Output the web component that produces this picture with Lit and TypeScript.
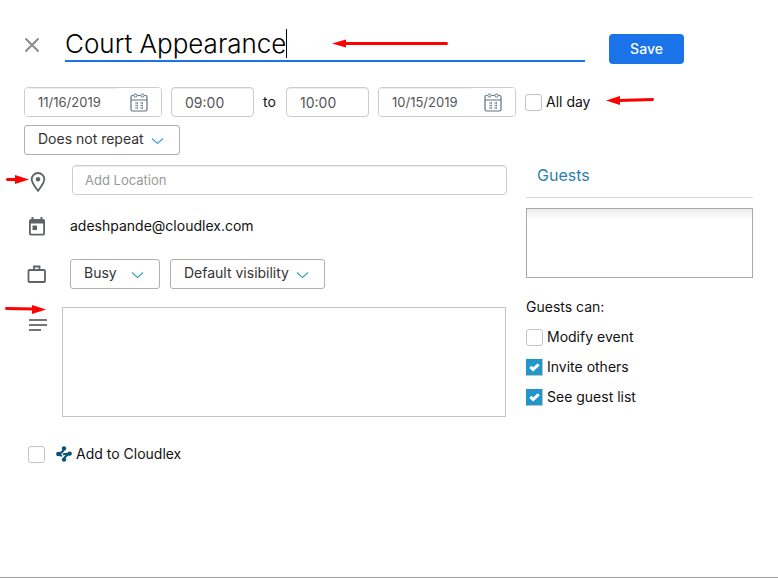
import { LitElement, html, svg, css } from "lit";
import { customElement, property } from "lit/decorators.js";

const chevron = svg`<path d="M1 1.5 L6.5 6.5 L12 1.5" fill="none" stroke="#3fa3cc" stroke-width="1.2"/>`;

@customElement("event-select")
class EventSelect extends LitElement {
  @property() label = "";
  @property() value = "";

  static styles = css`
    :host { display: block; position: relative; }
    select {
      appearance: none;
      display: block;
      width: 100%;
      height: 30px;
      padding: 0 13px 2px;
      border: 1px solid #b0b0b0;
      border-radius: 3px;
      background: #fff;
      color: #333;
      font: 14px/20px Inter, "Open Sans", sans-serif;
    }
    svg { position: absolute; right: 16px; top: 12px; pointer-events: none; }
  `;

  render() {
    return html`
      <select aria-label=${this.label}><option>${this.value}</option></select>
      <svg width="13" height="8" viewBox="0 0 13 8">${chevron}</svg>
    `;
  }
}

@customElement("event-date")
class EventDate extends LitElement {
  @property() label = "";
  @property() value = "";

  static styles = css`
    :host {
      display: flex;
      box-sizing: border-box;
      height: 30px;
      border: 1px solid #ccc;
      border-radius: 4px;
      overflow: hidden;
    }
    input {
      flex: 1;
      min-width: 0;
      padding: 0 0 0 13px;
      border: 0;
      color: #555;
      font: 13px/20px Inter, "Open Sans", sans-serif;
      box-shadow: inset 0 1px 1px rgba(0, 0, 0, 0.075);
    }
    button {
      display: flex;
      align-items: center;
      justify-content: center;
      width: 44px;
      padding: 0;
      border: 0;
      background: #fff;
    }
  `;

  render() {
    return html`
      <input type="text" aria-label=${this.label} .value=${this.value} />
      <button aria-label="Open calendar">
        <svg width="18" height="19" viewBox="0 0 18 19" fill="none" stroke="#5f7180">
          <path d="M3.5 2.5 H2.5 Q1 2.5 1 4 V16.5 Q1 18 2.5 18 H15.5 Q17 18 17 16.5 V4 Q17 2.5 15.5 2.5 H14.5 M7.5 2.5 H10.5 M1 7 H17" stroke-width="1.2"/>
          <circle cx="5.5" cy="2.5" r="1.6"/><circle cx="12.5" cy="2.5" r="1.6"/>
          <path d="M5.5 10 H8 M10.5 10 H13 M5.5 12.5 H8 M10.5 12.5 H13 M5.5 15 H8 M10.5 15 H13" stroke-width="1.7" stroke-dasharray="1.1 .4"/>
        </svg>
      </button>
    `;
  }
}

@customElement("event-check")
class EventCheck extends LitElement {
  @property() label = "";
  @property({ type: Boolean }) checked = false;
  @property({ type: Boolean }) logo = false;

  static styles = css`
    :host { display: block; }
    label { display: flex; align-items: center; gap: 4px; white-space: nowrap; }
    .logo { gap: 11px; }
    .text { display: flex; align-items: center; gap: 4px; }
    .box { display: grid; }
    input, .tick { grid-area: 1 / 1; }
    input {
      appearance: none;
      width: 17px;
      height: 17px;
      margin: 0;
      border: 1px solid #c4c4c4;
      border-radius: 3px;
      background: #fff;
    }
    input:checked {
      border-color: #2196c9 #bcc5ca #bcc5ca #2196c9;
      border-radius: 1px;
      background: #2196c9;
    }
    .tick { place-self: center; pointer-events: none; }
  `;

  render() {
    return html`
      <label class=${this.logo ? "logo" : ""}>
        <span class="box">
          <input type="checkbox" .checked=${this.checked} />
          ${this.checked
            ? html`<svg class="tick" width="11" height="9" viewBox="0 0 11 9"><path d="M1.3 3.8 L4.2 6.4 L9.7 1.4" fill="none" stroke="#fff" stroke-width="3"/></svg>`
            : ""}
        </span>
        <span class="text">
          ${this.logo
            ? html`<svg width="16" height="16" viewBox="0 0 16 16" stroke="#0b527b" fill="#0b527b">
                <g stroke="none"><circle cx="8" cy="2.4" r="2.2"/><circle cx="2.3" cy="8" r="2.2"/><circle cx="13.7" cy="7.6" r="2.2"/><circle cx="8" cy="13.6" r="2.2"/></g>
                <path d="M8 2.5 Q7.6 5.2 5.8 6.2 T2.3 8 M8 13.5 Q8.400 11 10.200 9.800 T13.700 7.600" fill="none" stroke-width="2.2"/>
                <path d="M2.3 8 L6 10 M7 8.300 L13.500 7.600" fill="none" stroke-width="2"/>
              </svg>`
            : ""}
          ${this.label}
        </span>
      </label>
    `;
  }
}

@customElement("app-root")
class AppRoot extends LitElement {
  static styles = css`
    :host {
      display: block;
      position: relative;
      box-sizing: border-box;
      min-height: 100vh;
      padding: 26px 25px 0 24px;
      border-bottom: 1px solid #999;
      background: #fff;
      color: #111;
      font: 14px/20px Inter, "Open Sans", sans-serif;
    }
    * { box-sizing: border-box; }
    svg { display: block; }
    header { display: flex; height: 38px; padding-right: 69px; }
    .close { width: 41px; height: 38px; padding: 0; border: 0; background: none; }
    .title { position: relative; flex: 1; height: 36px; margin-right: 24px; }
    .title input {
      width: 100%;
      height: 36px;
      padding: 0;
      border: 0;
      border-bottom: 2px solid #1a73e8;
      outline: 0;
      color: #000;
      font: 300 26px/32px Inter, "Open Sans", sans-serif;
    }
    .caret { position: absolute; left: 221px; top: 3px; width: 1px; height: 29px; background: #000; }
    .save {
      align-self: end;
      width: 75px;
      height: 30px;
      padding: 0;
      border: 0;
      border-radius: 4px;
      background: #1a73e8;
      color: #fff;
      font: 500 14px/20px Inter, "Open Sans", sans-serif;
    }
    .when { display: flex; align-items: center; gap: 9px; margin-top: 23px; }
    .to { width: 14px; }
    .date { width: 138px; }
    .time {
      width: 83px;
      height: 30px;
      padding: 0 13px;
      border: 1px solid #ccc;
      border-radius: 4px;
      color: #555;
      font: 14px/20px Inter, "Open Sans", sans-serif;
      box-shadow: inset 0 1px 1px rgba(0, 0, 0, 0.075);
    }
    .repeat { width: 156px; margin: 8px 0 10px; }
    .body { display: grid; grid-template-columns: minmax(0, 1fr) 227px; gap: 19px; }
    .row { display: flex; align-items: center; gap: 10px; }
    .icon { display: flex; justify-content: center; width: 28px; flex: none; }
    .place .icon { padding-top: 4px; }
    .account .icon, .status .icon { width: 26px; }
    .location {
      flex: 1;
      min-width: 0;
      height: 30px;
      margin-left: 10px;
      padding: 0 12px;
      border: 1px solid #ccc;
      border-radius: 4px;
      font: 13px/20px Inter, "Open Sans", sans-serif;
      box-shadow: inset 0 1px 1px rgba(0, 0, 0, 0.075);
    }
    .location::placeholder { color: #999; }
    .account { height: 30px; margin-top: 16px; }
    .email { padding-left: 10px; }
    .status { margin-top: 18px; }
    .busy { width: 90px; margin-left: 10px; }
    .visibility { width: 155px; }
    .notes { align-items: start; margin-top: 18px; padding-right: 1px; }
    .notes .icon { padding-top: 11px; }
    textarea { display: block; resize: none; border: 1px solid #c4c4c4; background: #fff; }
    .notes textarea { flex: 1; min-width: 0; height: 110px; }
    .cloudlex { margin: 27px 0 20px 4px; }
    h2 {
      height: 33px;
      margin: 0;
      padding-left: 11px;
      border-bottom: 1px solid #d5d5dc;
      color: #2d7fb0;
      font: 16px/21px Inter, "Open Sans", sans-serif;
    }
    .guests textarea {
      width: 100%;
      height: 70px;
      margin-top: 10px;
      border-color: #a9a9a9;
      background: linear-gradient(#ebebeb, #fff 10px);
    }
    fieldset { margin: 19px 0 0; padding: 0; border: 0; }
    legend { padding: 0; margin-bottom: 5px; }
    fieldset event-check { padding: 5px 0; }
    .arrow { position: absolute; pointer-events: none; fill: red; stroke: red; stroke-linecap: round; }
    .a-title { left: 331px; top: 38px; }
    .a-day { left: 605px; top: 94px; }
    .a-pin { left: 5px; top: 174px; }
    .a-notes { left: 5px; top: 303px; }
  `;

  render() {
    return html`
      <header>
        <button class="close" aria-label="Close">
          <svg width="16" height="38" viewBox="0 0 16 38"><path d="M2 13 L14 25 M14 13 L2 25" stroke="#8c8c8c" stroke-width="2" stroke-linecap="round"/></svg>
        </button>
        <div class="title">
          <input type="text" aria-label="Event title" .value=${"Court Appearance"} />
          <span class="caret"></span>
        </div>
        <button class="save">Save</button>
      </header>

      <div class="when">
        <event-date class="date" label="Start date" value="11/16/2019"></event-date>
        <input class="time" type="text" aria-label="Start time" .value=${"09:00"} />
        <span class="to">to</span>
        <input class="time" type="text" aria-label="End time" .value=${"10:00"} />
        <event-date class="date" label="End date" value="10/15/2019"></event-date>
        <event-check label="All day"></event-check>
      </div>
      <event-select class="repeat" label="Repeat" value="Does not repeat"></event-select>

      <div class="body">
        <main>
          <div class="row place">
            <span class="icon">
              <svg width="16" height="20" viewBox="0 0 16 20"><path d="M8 1 A6.3 6.3 0 0 1 14.3 7.3 C14.3 11 10.5 15.5 8 18.8 C5.5 15.5 1.7 11 1.7 7.3 A6.3 6.3 0 0 1 8 1 Z" fill="none" stroke="#5f6368" stroke-width="1.8"/><circle cx="8" cy="7.3" r="2.2" fill="#5f6368"/></svg>
            </span>
            <input class="location" type="text" aria-label="Location" placeholder="Add Location" />
          </div>
          <div class="row account">
            <span class="icon">
              <svg width="18" height="19" viewBox="0 0 18 19"><path fill="#5f6368" fill-rule="evenodd" d="M3.5 0 H5.5 V2 H12.5 V0 H14.5 V2 H15 Q17 2 17 4 V16.5 Q17 18.5 15 18.5 H3 Q1 18.5 1 16.5 V4 Q1 2 3 2 H3.5 Z M2.8 6.5 V16.7 H15.2 V6.5 Z M4.5 8.5 H9 V13 H4.5 Z"/></svg>
            </span>
            <span class="email">adeshpande@cloudlex.com</span>
          </div>
          <div class="row status">
            <span class="icon">
              <svg width="20" height="18" viewBox="0 0 20 18" fill="none" stroke="#5f6368" stroke-width="1.8"><rect x="1.5" y="5" width="16.5" height="12" rx="1"/><path d="M7 5 V1.5 H12.5 V5"/></svg>
            </span>
            <event-select class="busy" label="Availability" value="Busy"></event-select>
            <event-select class="visibility" label="Visibility" value="Default visibility"></event-select>
          </div>
          <div class="row notes">
            <span class="icon">
              <svg width="18" height="14" viewBox="0 0 18 14"><path d="M0 2 H18 M0 7 H18 M0 12 H12" stroke="#757575" stroke-width="2"/></svg>
            </span>
            <textarea aria-label="Description"></textarea>
          </div>
          <event-check class="cloudlex" logo label="Add to Cloudlex"></event-check>
        </main>

        <aside class="guests">
          <h2>Guests</h2>
          <textarea aria-label="Guests"></textarea>
          <fieldset>
            <legend>Guests can:</legend>
            <event-check label="Modify event"></event-check>
            <event-check label="Invite others" checked></event-check>
            <event-check label="See guest list" checked></event-check>
          </fieldset>
        </aside>
      </div>

      <svg class="arrow a-title" width="118" height="12" viewBox="0 0 118 12"><path d="M14 5.5 H115.5" stroke-width="3"/><path d="M1 5.5 L15 1.5 V9.5 Z" stroke="none"/></svg>
      <svg class="arrow a-day" width="50" height="12" viewBox="0 0 50 12"><path d="M14 6.5 L47.5 5.5" stroke-width="3"/><path d="M1 6.5 L15 2 V11 Z" stroke="none"/></svg>
      <svg class="arrow a-pin" width="25" height="12" viewBox="0 0 25 12"><path d="M2.5 5.5 H12" stroke-width="3"/><path d="M24 5.5 L10 1 V10 Z" stroke="none"/></svg>
      <svg class="arrow a-notes" width="42" height="12" viewBox="0 0 42 12"><path d="M1.5 5.5 L29 6" stroke-width="3"/><path d="M41 6.5 L27 2 V11 Z" stroke="none"/></svg>
    `;
  }
}
